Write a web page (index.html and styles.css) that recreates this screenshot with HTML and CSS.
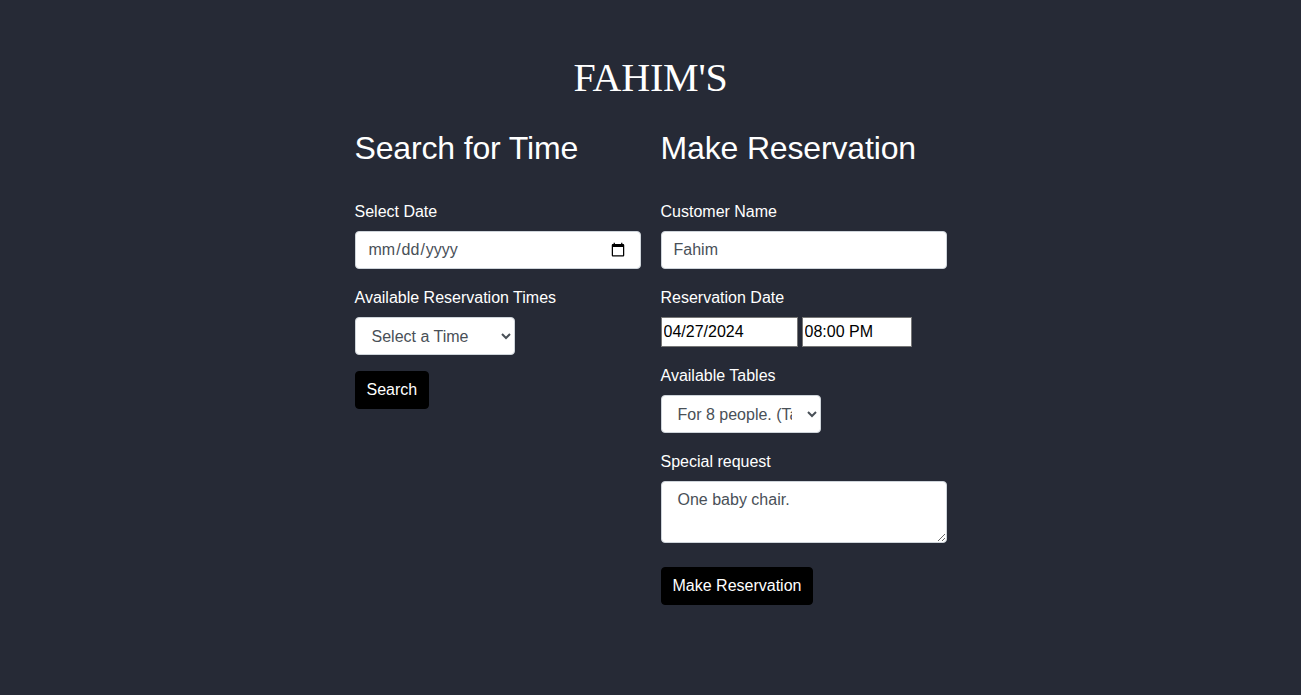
FILE: index.html
```html
<!DOCTYPE html>
<html>
<head>
<meta charset="utf-8">
<link rel="stylesheet" href="styles.css">
</head>
<body>
<div class="page">
  <h1 class="brand">FAHIM'S</h1>
  <div class="columns">
    <section class="col">
      <h2 class="heading">Search for Time</h2>
      <div class="group">
        <label class="label">Select Date</label>
        <input class="control" type="date">
      </div>
      <div class="group">
        <label class="label">Available Reservation Times</label>
        <select class="control select"><option>Select a Time</option></select>
      </div>
      <button class="btn">Search</button>
    </section>
    <section class="col">
      <h2 class="heading">Make Reservation</h2>
      <div class="group">
        <label class="label">Customer Name</label>
        <input class="control" type="text" value="Fahim">
      </div>
      <div class="group">
        <label class="label">Reservation Date</label>
        <div class="datetime">
          <input class="plain date" type="text" value="04/27/2024">
          <input class="plain time" type="text" value="08:00 PM">
        </div>
      </div>
      <div class="group">
        <label class="label">Available Tables</label>
        <select class="control select"><option>For 8 people. (Table 5)</option></select>
      </div>
      <div class="group last">
        <label class="label">Special request</label>
        <textarea class="control area">One baby chair.</textarea>
      </div>
      <button class="btn">Make Reservation</button>
    </section>
  </div>
</div>
</body>
</html>
```
FILE: styles.css
```css
html, body {
  margin: 0;
  padding: 0;
  background: #262a36;
  color: #ffffff;
  font-family: "Liberation Sans", Arial, sans-serif;
  font-size: 16px;
}
.page {
  display: flex;
  flex-direction: column;
  align-items: center;
  padding-top: 54px;
  box-sizing: border-box;
  height: 695px;
}
.brand {
  margin: 0 0 28px 0;
  font-family: "Liberation Serif", "Times New Roman", serif;
  font-weight: normal;
  font-size: 40px;
  line-height: 47px;
  letter-spacing: -0.2px;
}
.columns {
  display: flex;
  gap: 20px;
  width: 592px;
}
.col {
  width: 286px;
  display: flex;
  flex-direction: column;
  align-items: flex-start;
}
.heading {
  margin: 0 0 32px 0;
  font-size: 32px;
  font-weight: normal;
  line-height: 38px;
  letter-spacing: -0.15px;
}
.group {
  display: flex;
  flex-direction: column;
  align-items: flex-start;
  margin-bottom: 16px;
  width: 100%;
}
.group.last {
  margin-bottom: 24px;
}
.label {
  font-size: 16px;
  line-height: 24px;
  margin-bottom: 8px;
  font-weight: 300;
  position: relative;
  top: 1px;
}
.control {
  box-sizing: border-box;
  width: 286px;
  height: 38px;
  padding: 6px 12px;
  font-family: "Liberation Sans", Arial, sans-serif;
  font-size: 16px;
  color: #495057;
  background: #ffffff;
  border: 1px solid #ced4da;
  border-radius: 4px;
  outline: none;
}
.select {
  width: 160px;
}
.area {
  height: 62px;
  padding: 6px 16px;
  line-height: 24px;
  resize: vertical;
}
.datetime {
  display: flex;
  gap: 4px;
}
.plain {
  box-sizing: border-box;
  height: 30px;
  padding: 1px 2px;
  font-family: "Liberation Sans", Arial, sans-serif;
  font-size: 16px;
  color: #000000;
  background: #ffffff;
  border: 1px solid #767676;
  border-radius: 0;
  outline: none;
}
.date { width: 137px; }
.time { width: 110px; }
.btn {
  height: 38px;
  padding: 6px 11px;
  background: #000000;
  color: #ffffff;
  border: 1px solid #000000;
  border-radius: 4px;
  font-family: "Liberation Sans", Arial, sans-serif;
  font-size: 16px;
  line-height: 24px;
  font-weight: 300;
}
```
